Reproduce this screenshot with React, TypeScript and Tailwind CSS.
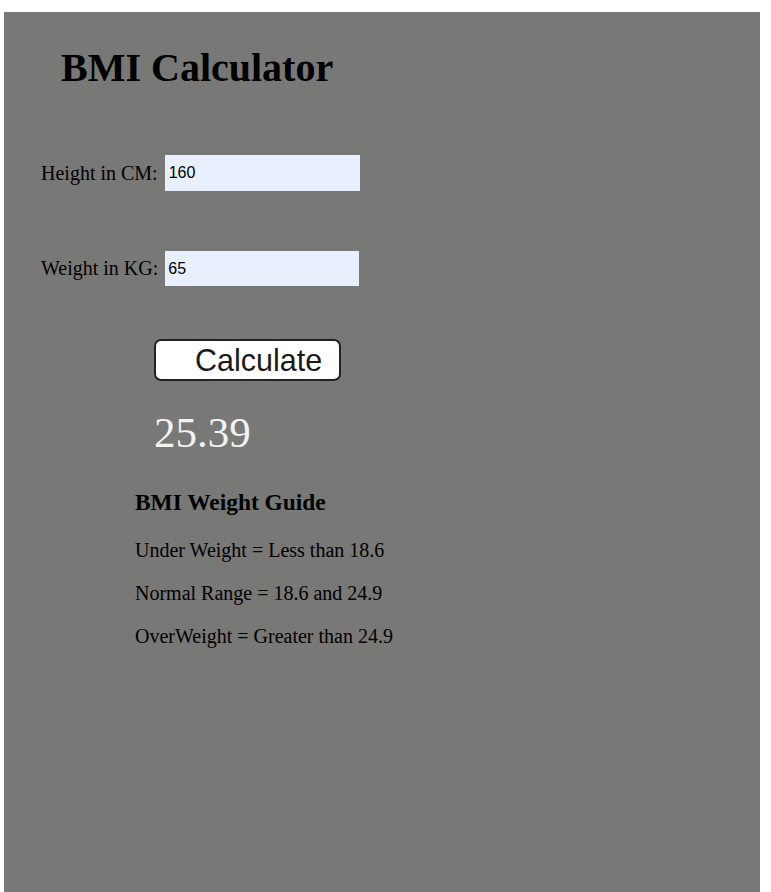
import { useState } from "react";

const App = () => {
  const [height, setHeight] = useState("160");
  const [weight, setWeight] = useState("65");
  const [bmi, setBmi] = useState("25.39");

  const calculate = () => {
    const h = parseFloat(height) / 100;
    const w = parseFloat(weight);
    if (!h || !w) return;
    setBmi((w / (h * h)).toFixed(2));
  };

  return (
    <div className="min-h-[892px] bg-white pt-[12px] pl-[4px]">
      <div className="w-[756px] h-[880px] bg-[#787876] flex flex-col font-['Liberation_Serif','Times_New_Roman',serif] text-black">
        {/* Title */}
        <h1 className="mt-[33px] ml-[57px] text-[40px] leading-[46px] font-bold">BMI Calculator</h1>

        {/* Inputs */}
        <div className="mt-[64px] ml-[37px] flex items-center gap-[7px]">
          <label className="text-[20px] leading-[23px]">Height in CM:</label>
          <input
            type="text"
            value={height}
            onChange={(e) => setHeight(e.target.value)}
            className="w-[195px] h-[36px] pl-[4px] bg-[#e8f0fe] text-black text-[16px] font-['Liberation_Sans',Arial,sans-serif] outline-none"
          />
        </div>

        <div className="mt-[60px] ml-[37px] flex items-center gap-[7px]">
          <label className="text-[20px] leading-[23px]">Weight in KG:</label>
          <input
            type="text"
            value={weight}
            onChange={(e) => setWeight(e.target.value)}
            className="w-[194px] h-[35px] pl-[3px] bg-[#e8f0fe] text-black text-[16px] font-['Liberation_Sans',Arial,sans-serif] outline-none"
          />
        </div>

        {/* Button */}
        <button
          onClick={calculate}
          className="mt-[53px] ml-[150px] w-[187px] h-[42px] pl-[39px] text-left bg-white border-2 border-[#222222] rounded-[7px] text-[30.5px] leading-[34px] text-[#1a1a1a] font-['Liberation_Sans',Arial,sans-serif]"
        >
          Calculate
        </button>

        {/* Result */}
        <div className="mt-[27px] ml-[150px] text-[43px] leading-[50px] text-[#f2f2f2]">{bmi}</div>

        {/* Guide */}
        <div className="mt-[31px] ml-[131px] flex flex-col">
          <h3 className="text-[23.4px] leading-[27px] font-bold">BMI Weight Guide</h3>
          <p className="mt-[23px] text-[20px] leading-[23px]">Under Weight = Less than 18.6</p>
          <p className="mt-[20px] text-[20px] leading-[23px]">Normal Range = 18.6 and 24.9</p>
          <p className="mt-[20px] text-[20px] leading-[23px]">OverWeight = Greater than 24.9</p>
        </div>
      </div>
    </div>
  );
};

export default App;
